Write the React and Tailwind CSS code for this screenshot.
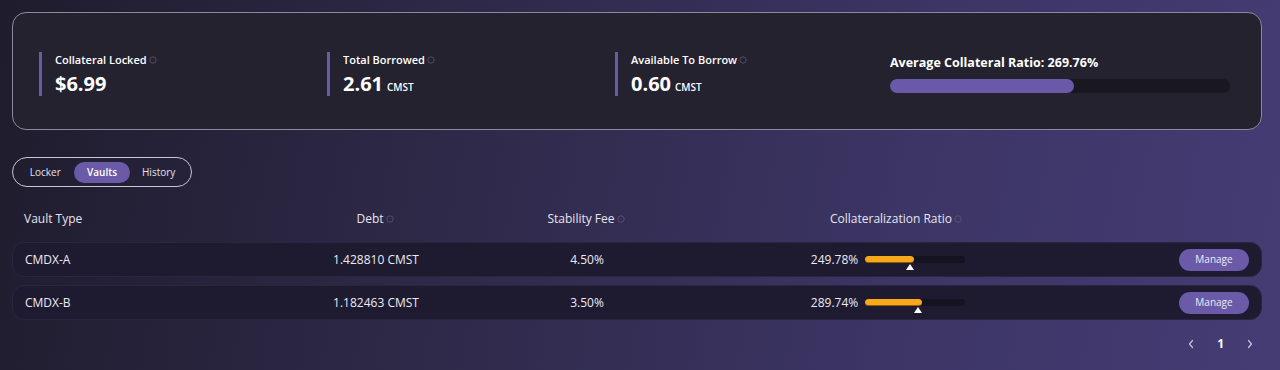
import React from "react";

const Info = () => (
  <svg width="8" height="8" viewBox="0 0 10 10" className="ml-[2px] inline-block">
    <circle cx="5" cy="5" r="4" fill="none" stroke="#5c5a6e" strokeWidth="1" />
  </svg>
);

const Stat = ({ title, value, unit }) => (
  <div className="mt-[6px] flex h-[44px] w-[288px] flex-col justify-between border-l-[3px] border-[#6a5aa8] py-[1px] pl-[13px]">
    <div className="flex items-center text-[11px] font-semibold leading-[14px] text-white">
      {title}
      <Info />
    </div>
    <div className="flex items-baseline text-white">
      <span className="text-[20px] font-bold leading-[22px]">{value}</span>
      {unit && <span className="ml-[4px] text-[10px] font-semibold">{unit}</span>}
    </div>
  </div>
);

const rows = [
  { type: "CMDX-A", debt: "1.428810 CMST", fee: "4.50%", ratio: "249.78%", fill: 49, mark: 45 },
  { type: "CMDX-B", debt: "1.182463 CMST", fee: "3.50%", ratio: "289.74%", fill: 57, mark: 53 },
];

const grid = "grid grid-cols-[226px_250px_172px_430px_1fr] items-center px-3";

const Chevron = ({ left }) => (
  <svg width="8" height="10" viewBox="0 0 8 10" fill="none" stroke="#c8c4dc" strokeWidth="1.2" strokeLinecap="round" strokeLinejoin="round">
    {left ? <path d="M5.5 1.5 L2.5 5 L5.5 8.5" /> : <path d="M2.5 1.5 L5.5 5 L2.5 8.5" />}
  </svg>
);

export default function App() {
  return (
    <div
      className="h-[370px] w-[1280px] overflow-hidden bg-[linear-gradient(100deg,#1f1c2d_0%,#2e2948_35%,#3c3565_70%,#453c74_100%)] pb-3 pl-3 pr-[18px] pt-3 text-white"
      style={{ fontFamily: "'Open Sans', 'Noto Sans', sans-serif" }}
    >
      <div className="flex h-[118px] items-center rounded-[14px] border border-[#8d8aa0] bg-[#23222e] pl-[26px]">
        <Stat title="Collateral Locked" value="$6.99" />
        <Stat title="Total Borrowed" value="2.61" unit="CMST" />
        <Stat title="Available To Borrow" value="0.60" unit="CMST" />
        <div className="ml-[-13px] mt-[6px] flex w-[340px] flex-col">
          <div className="text-[12.5px] font-bold leading-[16px]">Average Collateral Ratio: 269.76%</div>
          <div className="mt-[8px] h-[14px] w-full rounded-full bg-[#19171f]">
            <div className="h-full w-[54%] rounded-full bg-[#6a58a8]" />
          </div>
        </div>
      </div>

      <div className="mt-[27px] flex h-[30px] w-[180px] items-center rounded-full border border-[#c9c6d6] px-[4px] text-[10px]">
        <div className="flex w-[57px] justify-center text-[#e4e2ee]">Locker</div>
        <div className="flex h-[21px] w-[57px] items-center justify-center rounded-full bg-[#6a5aa8] font-semibold">Vaults</div>
        <div className="flex w-[57px] justify-center text-[#e4e2ee]">History</div>
      </div>

      <div className={`${grid} mt-[21px] h-[22px] text-[12px] text-[#e6e4ef]`}>
        <div>Vault Type</div>
        <div className="flex items-center justify-center">Debt<Info /></div>
        <div className="flex items-center justify-center">Stability Fee<Info /></div>
        <div className="flex items-center justify-center pl-[18px]">Collateralization Ratio<Info /></div>
        <div />
      </div>

      <div className="mt-[12px] flex flex-col gap-[8px]">
        {rows.map((r) => (
          <div key={r.type} className={`${grid} h-[35px] rounded-[12px] border border-[#2a2640] bg-[#1e1a30] text-[12px] text-[#ecebf3]`}>
            <div>{r.type}</div>
            <div className="text-center">{r.debt}</div>
            <div className="text-center">{r.fee}</div>
            <div className="flex items-center justify-center">
              <span className="mr-[7px]">{r.ratio}</span>
              <div className="relative h-[7px] w-[100px] rounded-full bg-[#15131f]">
                <div className="h-full rounded-full border-b border-[#8a5a10] bg-[#f7a81b]" style={{ width: `${r.fill}%` }} />
                <div
                  className="absolute top-[8px] h-0 w-0 border-x-[4px] border-b-[6px] border-x-transparent border-b-white"
                  style={{ left: `calc(${r.mark}% - 4px)` }}
                />
              </div>
            </div>
            <div className="flex justify-end">
              <div className="flex h-[22px] w-[70px] items-center justify-center rounded-full bg-[#6a5aa8] text-[10px] text-[#eeecf7]">Manage</div>
            </div>
          </div>
        ))}
      </div>

      <div className="mt-[15px] flex items-center justify-end gap-[22px] pr-[8px] text-[12px]">
        <Chevron left />
        <span className="font-bold">1</span>
        <Chevron />
      </div>
    </div>
  );
}
